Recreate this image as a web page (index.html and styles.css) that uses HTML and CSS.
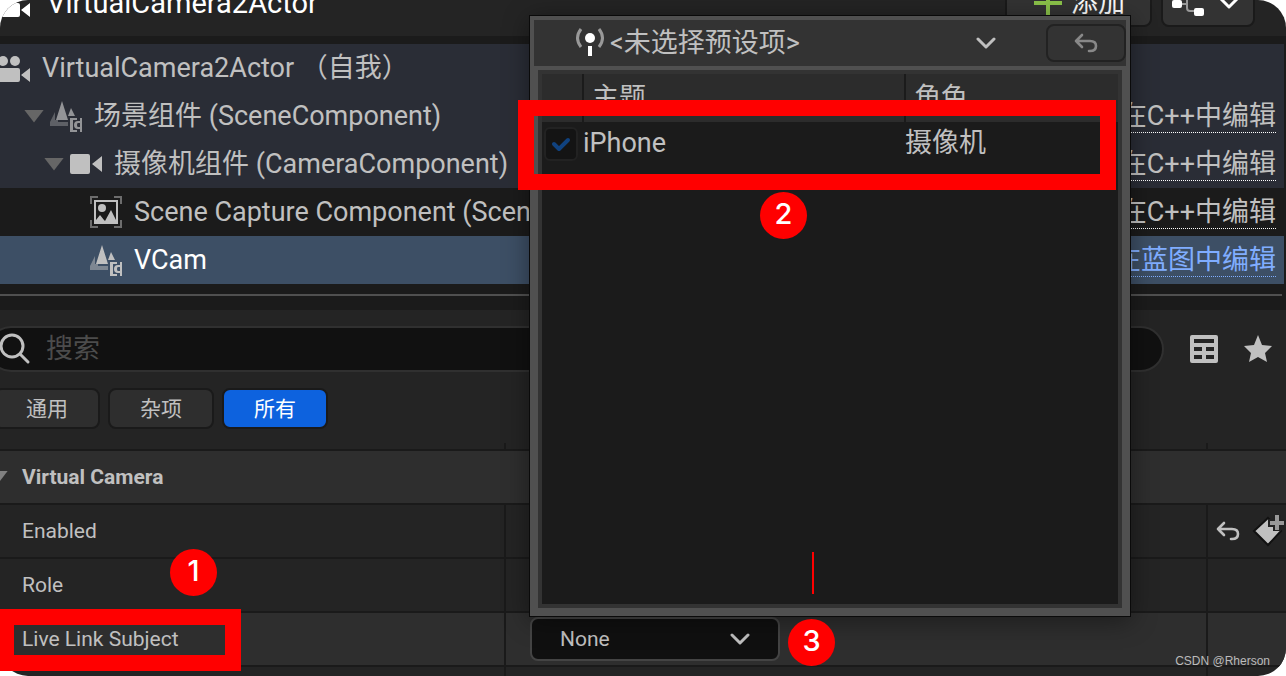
FILE: index.html
```html
<!DOCTYPE html>
<html lang="zh-CN">
<head>
    <meta charset="UTF-8">
    <title>VirtualCamera2Actor</title>
    <link rel="stylesheet" href="styles.css">
</head>
<body>
    <!-- shared icons -->
    <svg class="sprite" aria-hidden="true">
        <symbol id="icon-actor" viewBox="2 0 30 32">
            <circle cx="5" cy="9" r="5"/>
            <circle cx="17" cy="9" r="5"/>
            <path d="M0 16h20q2 0 2 2v10q0 2-2 2H0zM23 23l9-7v14z"/>
        </symbol>
        <symbol id="icon-scene" viewBox="0 0 32 32">
            <path opacity=".5" d="M5 12v8h3v2h10v4H0v-4z"/>
            <path d="M12 1l6 19H6zM21 8l4 8h-7z"/>
            <path d="M20 18h7v2h-4v10h4v2h-7zM30 18h2v14h-2z"/>
            <path d="M30 21h-2q-4 0-4 4t4 4h2v-2h-2q-1 0-1-2t1-2h2z"/>
        </symbol>
        <symbol id="icon-camera" viewBox="0 0 32 32">
            <path d="M2 6h16q2 0 2 2v16q0 2-2 2H2q-2 0-2-2V8q0-2 2-2zM22 16l10-8v16z"/>
        </symbol>
        <symbol id="icon-capture" viewBox="0 0 32 32">
            <path fill="none" stroke="currentColor" stroke-width="2" opacity=".5" d="M1 8V1h7M24 1h7v7M31 24v7h-7M8 31H1v-7"/>
            <path fill="none" stroke="currentColor" stroke-width="2" d="M5 5h22v22H5z"/>
            <circle cx="12" cy="12" r="4"/>
            <path d="M6 26v-2l4-5 4 5 1 1 6-11 5 10v2z"/>
        </symbol>
        <symbol id="icon-chevron" viewBox="0 0 20 12">
            <path fill="none" stroke="currentColor" stroke-width="3" stroke-linecap="round" stroke-linejoin="round" d="M2 2l8 8 8-8"/>
        </symbol>
        <symbol id="icon-undo" viewBox="0 0 24 20">
            <path fill="none" stroke="currentColor" stroke-width="2.6" stroke-linecap="round" stroke-linejoin="round" d="M8 2L2 8l6 6M2 8h14q6 0 6 5 0 5-6 5h-1"/>
        </symbol>
    </svg>

    <div class="editor">
        <header class="toolbar">
            <svg class="icon-actor"><use href="#icon-actor"/></svg>
            <h1>VirtualCamera2Actor</h1>
            <button class="tool-button add">
                <svg width="28" height="28" viewBox="0 0 28 28"><path d="M14 0v28M0 14h28" stroke="#8bc34a" stroke-width="4"/></svg>
                添加
            </button>
            <button class="tool-button graph" aria-label="蓝图">
                <svg width="34" height="32" viewBox="0 0 34 32">
                    <path d="M10 17h6M16 5v16q0 3 3 3h4M16 5h7" fill="none" stroke="#999" stroke-width="2"/>
                    <rect x="1" y="13" width="10" height="8" rx="2"/>
                    <rect x="23" y="21" width="10" height="8" rx="2"/>
                    <rect x="23" y="1" width="10" height="8" rx="2"/>
                </svg>
                <svg class="chevron"><use href="#icon-chevron"/></svg>
            </button>
        </header>

        <section class="tree">
            <div class="tree-row group">
                <svg class="icon-actor"><use href="#icon-actor"/></svg>
                <span class="name">VirtualCamera2Actor （自我）</span>
            </div>
            <div class="tree-row group depth-1">
                <span class="arrow"></span>
                <svg class="icon dim"><use href="#icon-scene"/></svg>
                <span class="name">场景组件 (SceneComponent)</span>
                <a href="#">在C++中编辑</a>
            </div>
            <div class="tree-row group depth-2">
                <span class="arrow"></span>
                <svg class="icon"><use href="#icon-camera"/></svg>
                <span class="name">摄像机组件 (CameraComponent)</span>
                <a href="#">在C++中编辑</a>
            </div>
            <div class="tree-row depth-3">
                <svg class="icon"><use href="#icon-capture"/></svg>
                <span class="name">Scene Capture Component (Scene)</span>
                <a href="#">在C++中编辑</a>
            </div>
            <div class="tree-row depth-3 selected">
                <svg class="icon"><use href="#icon-scene"/></svg>
                <span class="name">VCam</span>
                <a href="#">在蓝图中编辑</a>
            </div>
        </section>

        <section class="details">
            <div class="search-bar">
                <label class="search">
                    <svg width="32" height="32" viewBox="0 0 32 32"><g fill="none" stroke="currentColor" stroke-width="3"><circle cx="12" cy="13" r="11"/><path d="M20 21l8 8" stroke-linecap="round"/></g></svg>
                    <input type="text" placeholder="搜索" aria-label="搜索">
                </label>
                <button class="icon-button" aria-label="属性矩阵">
                    <svg width="28" height="28" viewBox="0 0 28 28"><path fill-rule="evenodd" d="M2 0h24q2 0 2 2v24q0 2-2 2H2q-2 0-2-2V2q0-2 2-2zM4 4v4h20V4zM4 12v4h8v-4zM16 12v4h8v-4zM4 20v4h8v-4zM16 20v4h8v-4z"/></svg>
                </button>
                <button class="icon-button" aria-label="收藏">
                    <svg width="28" height="28" viewBox="0 0 28 28"><path d="M14 0l4 10 10 1-7 7 2 9-9-5-9 5 2-9-7-7 10-1z"/></svg>
                </button>
            </div>

            <div class="filters">
                <button>通用</button>
                <button>杂项</button>
                <button class="active">所有</button>
            </div>

            <div class="property ruler"><span></span><span></span><span></span></div>
            <h2><span class="arrow"></span>Virtual Camera</h2>
            <div class="property">
                <span class="label">Enabled</span>
                <span></span>
                <span class="actions">
                    <button class="icon-button" aria-label="重置"><svg class="undo"><use href="#icon-undo"/></svg></button>
                    <button class="icon-button" aria-label="添加关键帧">
                        <svg width="32" height="32" viewBox="0 0 32 32">
                            <path d="M16 3l13 13-13 14L2 16z" stroke="#111" stroke-width="2"/>
                            <path d="M25 0v16M16 8h16" stroke="#222" stroke-width="8"/>
                            <path d="M25 0v15M18 8h14" stroke="#999" stroke-width="4"/>
                        </svg>
                    </button>
                </span>
            </div>
            <div class="property">
                <span class="label">Role</span>
                <span></span>
                <span></span>
            </div>
            <div class="property hovered">
                <label class="label" for="subject">Live Link Subject</label>
                <span class="value">
                    <span class="combo">
                        <select id="subject"><option>None</option></select>
                        <svg class="chevron"><use href="#icon-chevron"/></svg>
                    </span>
                </span>
                <span></span>
            </div>
            <div class="property"><span></span><span></span><span></span></div>
        </section>

        <div class="popup">
            <div class="popup-header">
                <div class="preset">
                    <svg width="30" height="30" viewBox="0 0 30 30">
                        <path fill="none" stroke="#999" stroke-width="3" d="M6 1q-7 9 0 18M24 1q7 9 0 18"/>
                        <circle cx="15" cy="10" r="5" fill="#fff"/>
                        <path fill="#fff" d="M13 18h4v10h-4z"/>
                    </svg>
                    <select aria-label="预设"><option>&lt;未选择预设项&gt;</option></select>
                    <svg class="chevron"><use href="#icon-chevron"/></svg>
                </div>
                <button class="reset" aria-label="重置"><svg class="undo"><use href="#icon-undo"/></svg></button>
            </div>
            <div class="popup-body">
                <table>
                    <thead>
                        <tr><th class="col-check"></th><th class="col-subject">主题</th><th>角色</th></tr>
                    </thead>
                    <tbody>
                        <tr>
                            <td>
                                <label class="check">
                                    <input type="checkbox" checked aria-label="iPhone">
                                    <svg width="20" height="16" viewBox="0 0 20 16"><path fill="none" stroke="#10427f" stroke-width="4" stroke-linecap="round" stroke-linejoin="round" d="M3 8l5 5 9-9"/></svg>
                                </label>
                            </td>
                            <td>iPhone</td>
                            <td>摄像机</td>
                        </tr>
                    </tbody>
                </table>
            </div>
        </div>
    </div>

    <!-- annotations -->
    <div class="mark mark-subject"></div>
    <div class="mark mark-iphone"></div>
    <div class="mark-line"></div>
    <span class="step step-1">1</span>
    <span class="step step-2">2</span>
    <span class="step step-3">3</span>
    <span class="watermark">CSDN @Rherson</span>
</body>
</html>
```
FILE: styles.css
```css
* {
    box-sizing: border-box;
}

body {
    margin: 0;
    position: relative;
    height: 100vh;
    overflow: hidden;
    background-color: #fff;
    color: #c0c0c0;
    fill: #c0c0c0;
    font-family: Roboto, "Noto Sans CJK SC", sans-serif;
    font-size: 27px;
}

button,
input,
select {
    font: inherit;
    color: inherit;
    fill: inherit;
}

svg {
    display: block;
    flex: none;
}

.sprite {
    position: absolute;
    width: 0;
    height: 0;
}

.editor {
    position: relative;
    height: 100%;
    overflow: hidden;
    border-radius: 28px;
    background-color: #242424;
}

/* toolbar */
.toolbar {
    display: flex;
    align-items: flex-end;
    height: 36px;
    padding: 0 31px 9px 0;
    overflow: hidden;
    color: #fff;
    fill: #fff;
}

.toolbar h1 {
    flex: 1;
    margin: 0 0 0 17px;
    font-size: 29px;
    font-weight: 400;
    line-height: 48px;
}

.toolbar .icon-actor {
    margin-bottom: 8px;
}

.tool-button {
    display: flex;
    align-items: center;
    height: 48px;
    border: 2px solid #1a1a1a;
    border-radius: 8px;
    background-color: #333;
}

.add {
    gap: 9px;
    width: 147px;
    margin-right: 9px;
    padding: 0 0 0 27px;
    line-height: 40px;
}

.graph {
    gap: 14px;
    width: 94px;
    padding: 0 0 0 8px;
}

.icon-actor {
    width: 30px;
    height: 32px;
}

.icon {
    width: 32px;
    height: 32px;
    color: #c0c0c0;
}

.dim {
    opacity: 0.7;
}

.chevron {
    width: 20px;
    height: 12px;
}

.undo {
    width: 24px;
    height: 20px;
}

.arrow {
    flex: none;
    width: 20px;
    height: 13px;
    background-color: #666;
    clip-path: polygon(0 0, 100% 0, 50% 100%);
}

/* component tree */
.tree {
    padding: 8px 2px 14px 0;
    background-color: #1b1b1b;
}

.tree::after {
    content: "";
    display: block;
    height: 2px;
    margin: 10px 2px 0 0;
    background-color: #505050;
}

.tree-row {
    display: flex;
    align-items: center;
    height: 48px;
    padding-right: 8px;
    line-height: 32px;
    white-space: nowrap;
}

.tree-row .name {
    flex: 1;
    margin-left: 12px;
}

.tree-row .arrow {
    margin-right: 6px;
}

.tree-row a {
    border-bottom: 1px dotted #fff;
    color: inherit;
    text-decoration: none;
}

.group {
    background-color: #2a2d36;
}

.depth-1 {
    padding-left: 24px;
}

.depth-2 {
    padding-left: 44px;
}

.depth-3 {
    padding-left: 90px;
}

.selected {
    background-color: #3d4f65;
    color: #fff;
}

.tree-row.selected a {
    border-color: #80adff;
    color: #80adff;
}

/* details */
.details {
    font-size: 21px;
}

.search-bar {
    display: flex;
    align-items: center;
    gap: 26px;
    padding: 16px 14px 0 0;
}

.search {
    display: flex;
    flex: 1;
    align-items: center;
    height: 46px;
    margin-left: -12px;
    padding-left: 10px;
    border: 2px solid #303030;
    border-radius: 23px;
    background-color: #111;
    font-size: 27px;
}

.search input {
    flex: 1;
    height: 36px;
    margin-left: 14px;
    padding: 0;
    border: 0;
    outline: 0;
    background: none;
}

.search input::placeholder {
    color: #4c4c4c;
}

.icon-button {
    padding: 0;
    border: 0;
    background: none;
}

.filters {
    display: flex;
    gap: 8px;
    margin: 16px 0 14px -6px;
}

.filters button {
    width: 106px;
    height: 41px;
    padding: 0;
    border: 2px solid #1a1a1a;
    border-radius: 8px;
    background-color: #2e2e2e;
    font-size: 21px;
    line-height: 24px;
}

.filters .active {
    background-color: #0d62de;
    color: #fff;
}

h2 {
    display: flex;
    align-items: center;
    gap: 14px;
    height: 56px;
    margin: 0 0 0 -12px;
    border: solid #1a1a1a;
    border-width: 2px 0;
    background-color: #2e2e2e;
    font-size: 21px;
    font-weight: 700;
}

h2 .arrow {
    background-color: #808080;
}

.property {
    display: grid;
    grid-template-columns: 504px 1fr 80px;
    height: 54px;
    border-bottom: 2px solid #1a1a1a;
}

.property > * {
    display: flex;
    align-items: center;
}

.property > * + * {
    border-left: 2px solid #1a1a1a;
}

.property > :first-child {
    padding-left: 22px;
}

.property.ruler {
    height: 6px;
    border: 0;
}

.hovered {
    background-color: #2e2e2e;
}

.property .actions {
    gap: 12px;
    padding-left: 8px;
}

.property .value {
    padding-left: 24px;
}

.combo {
    position: relative;
    width: 250px;
}

.combo select {
    display: block;
    width: 100%;
    height: 44px;
    padding: 0 28px;
    border: 2px solid #444;
    border-radius: 8px;
    background-color: #101010;
    appearance: none;
}

.combo .chevron {
    position: absolute;
    top: 16px;
    right: 30px;
    pointer-events: none;
}

/* live link popup */
.popup {
    position: absolute;
    top: 15px;
    left: 529px;
    width: 602px;
    height: 602px;
    display: flex;
    flex-direction: column;
    border: 1px solid #0a0a0a;
    background-color: #505050;
    padding: 4px 4px 8px;
    box-shadow: 0 4px 24px rgba(0, 0, 0, 0.4);
}

.popup-header {
    display: flex;
    align-items: center;
    height: 46px;
    background-color: #333;
}

.preset {
    position: relative;
    display: flex;
    flex: 1;
    align-items: center;
    padding-left: 41px;
}

.preset select {
    flex: 1;
    height: 44px;
    padding: 0 0 0 5px;
    border: 0;
    background: none;
    appearance: none;
}

.preset .chevron {
    position: absolute;
    top: 16px;
    right: 50px;
    pointer-events: none;
}

.reset {
    display: grid;
    place-items: center;
    width: 80px;
    height: 38px;
    padding: 0;
    border: 2px solid #222;
    border-radius: 8px;
    background: none;
    color: #888;
}

.popup-body {
    flex: 1;
    margin: 4px 4px 0;
    border: 4px solid #333;
    background-color: #1b1b1b;
}

.popup table {
    width: 100%;
    table-layout: fixed;
    border-collapse: collapse;
}

.popup th {
    height: 48px;
    padding: 0 8px;
    background-color: #2c2c2c;
    font-weight: 400;
    line-height: 40px;
    text-align: left;
}

.popup th + th {
    border-left: 2px solid #1b1b1b;
}

.popup td {
    height: 42px;
    padding: 0;
    line-height: 40px;
}

.col-check {
    width: 41px;
}

.col-subject {
    width: 322px;
}

.check {
    display: grid;
    place-items: center;
    width: 34px;
    margin: 2px 0 0 2px;
}

.check > * {
    grid-area: 1 / 1;
}

.check input {
    width: 34px;
    height: 34px;
    margin: 0;
    border: 2px solid #222;
    border-radius: 6px;
    background-color: #141414;
    appearance: none;
}

.check svg {
    pointer-events: none;
}

/* annotations */
.mark {
    position: absolute;
    border: 16px solid #ff0000;
}

.mark-subject {
    top: 609px;
    left: -2px;
    width: 243px;
    height: 62px;
}

.mark-iphone {
    top: 100px;
    left: 518px;
    width: 598px;
    height: 90px;
}

.mark-line {
    position: absolute;
    top: 552px;
    left: 812px;
    width: 2px;
    height: 42px;
    background-color: #ff0000;
}

.step {
    position: absolute;
    width: 47px;
    height: 47px;
    border-radius: 50%;
    background-color: #ff0000;
    color: #fff;
    font-family: Inter, sans-serif;
    font-size: 29px;
    font-weight: 500;
    line-height: 43px;
    text-align: center;
}

.step-1 {
    top: 549px;
    left: 170px;
}

.step-2 {
    top: 192px;
    left: 760px;
}

.step-3 {
    top: 619px;
    left: 788px;
}

.watermark {
    position: absolute;
    right: 16px;
    bottom: 8px;
    color: #bbb;
    font-family: "Liberation Sans", sans-serif;
    font-size: 12px;
    line-height: 14px;
}
```
